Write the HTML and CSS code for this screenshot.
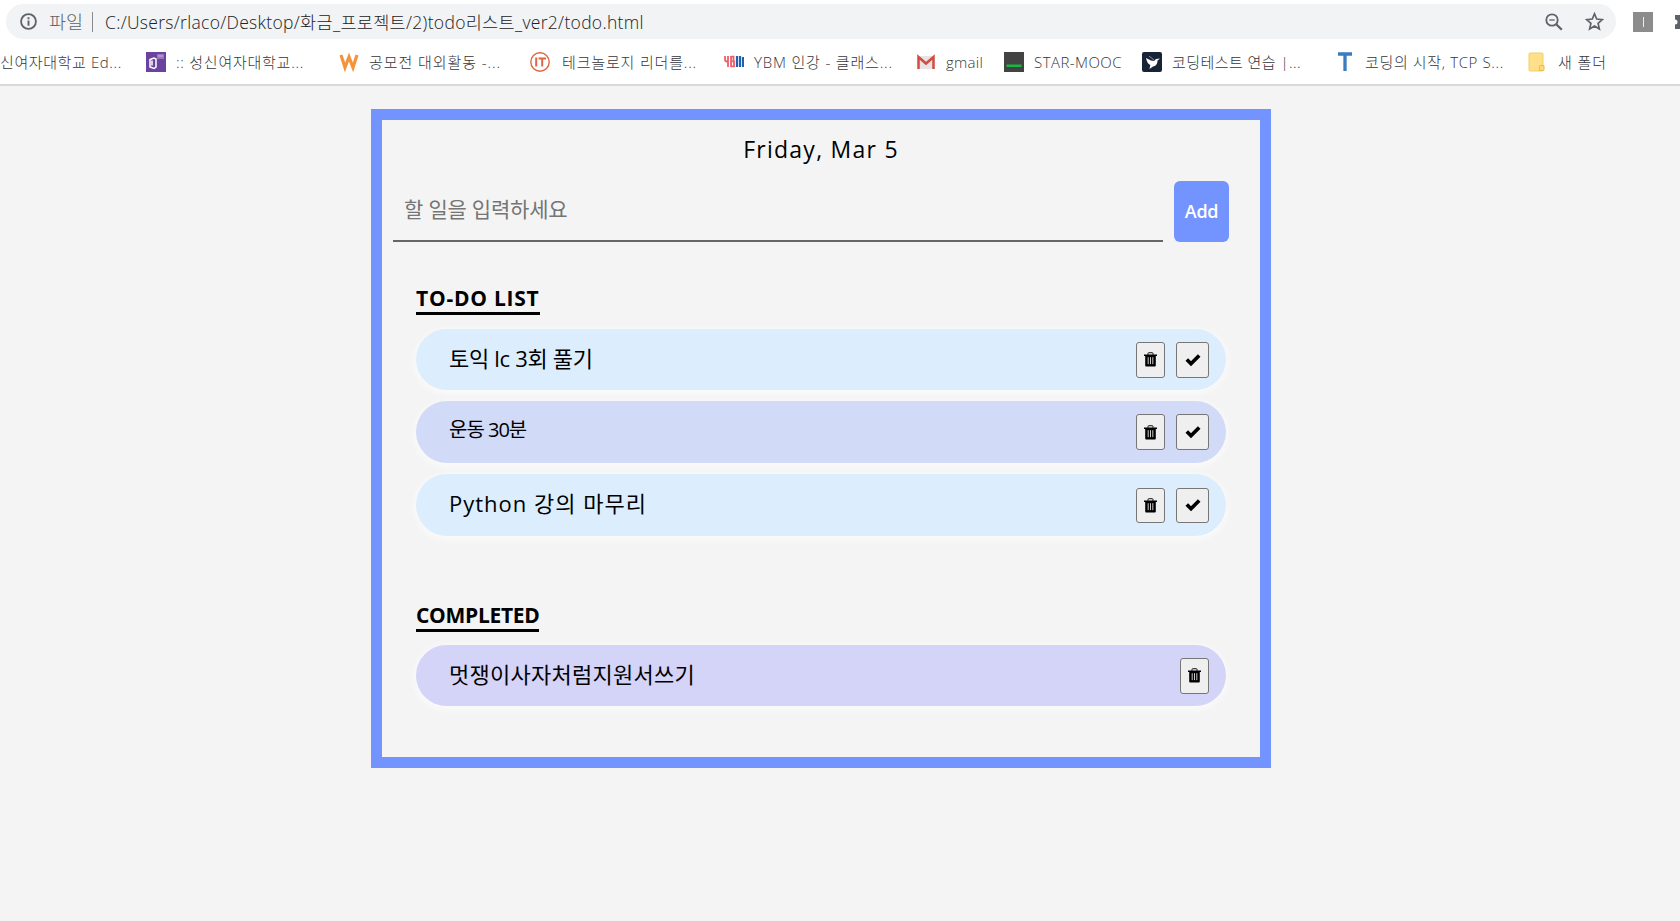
FILE: index.html
```html
<!DOCTYPE html>
<html lang="ko">
<head>
<meta charset="utf-8">
<title>todo</title>
<link rel="stylesheet" href="styles.css">
</head>
<body>
<header class="browser">
  <div class="toolbar">
    <div class="address">
      <svg class="info" viewBox="0 0 16 16"><circle cx="8" cy="8" r="7" fill="none" stroke="#5f6368" stroke-width="1.7"/><path d="M8 7v5M8 4v1.8" stroke="#5f6368" stroke-width="1.8"/></svg>
      <span class="scheme">파일</span>
      <span class="divider"></span>
      <span class="url">C:/Users/rlaco/Desktop/화금_프로젝트/2)todo리스트_ver2/todo.html</span>
      <svg class="zoom" viewBox="0 0 18 18"><circle cx="7" cy="7" r="5.7" fill="none" stroke="#5f6368" stroke-width="1.8"/><path d="M4.3 7h5.4" stroke="#5f6368" stroke-width="1.3"/><path d="M11 11l5.8 5.8" stroke="#5f6368" stroke-width="2.3"/></svg>
      <svg class="star" viewBox="0 0 18 18"><path d="M9 1.7l2.1 5 5.4.5-4.1 3.6 1.2 5.3L9 13.300l-4.600 2.800 1.200-5.300L1.500 7.200l5.400-.5z" fill="none" stroke="#5f6368" stroke-width="1.6"/></svg>
    </div>
    <span class="ext"><span class="ext-bar"></span></span>
    <svg class="puzzle" viewBox="0 0 10 16"><path d="M0 1h10v14H0v-4.500a2.500 2.500 0 0 0 0-5z" fill="#5f6368"/></svg>
  </div>
  <nav class="bookmarks">
    <div class="bm bm1"><span class="t">신여자대학교 Ed...</span></div>
    <div class="bm bm2"><svg viewBox="0 0 20 20"><path fill="#6b429d" d="M0 0h20v20H0z"/><path fill="#9478bd" d="M11 2h7v5h-7z"/><path fill="#c5b4dc" d="M12 3.500h5v1h-5z"/><path d="M4 7.500l4-1.500 2 1v8l-2 1.500-4-1.500zM6 8.500v5" fill="none" stroke="#fff" stroke-width="1.500"/></svg><span class="t">:: 성신여자대학교...</span></div>
    <div class="bm bm3"><svg viewBox="0 0 20 20"><path d="M2 3l4 12.500L10 5l4 10.500L18 3" fill="none" stroke="#f4943a" stroke-width="3.200"/></svg><span class="t">공모전 대외활동 -...</span></div>
    <div class="bm bm4"><svg viewBox="0 0 20 20"><circle cx="10" cy="10" r="9.200" fill="#fff" stroke="#dd6742" stroke-width="1.400"/><path d="M6.200 5.500v9M8.500 6.500H16M12.200 6.500v8" fill="none" stroke="#dd6742" stroke-width="2"/></svg><span class="t">테크놀로지 리더를...</span></div>
    <div class="bm bm5"><svg viewBox="0 0 20 20"><path d="M1 4v3.500q0 2 2 2h1V4M4 9v6M7 4v11M7 4.700h2.500v4.600H7.500h2.500v5H7" fill="none" stroke="#ee5f69" stroke-width="1.800"/><path d="M13 4v11M16 4v11M19 5v10" stroke="#1e61b1" stroke-width="2.200"/></svg><span class="t">YBM 인강 - 클래스...</span></div>
    <div class="bm bm6"><svg viewBox="0 0 20 20"><path fill="#e6e4e4" d="M2 4h16v13H2z"/><path d="M2.500 17V5L10 11.500 17.500 5v12" fill="none" stroke="#d34b43" stroke-width="2.500"/></svg><span class="t">gmail</span></div>
    <div class="bm bm7"><svg viewBox="0 0 20 20"><path fill="#434343" d="M0 0h20v20H0z"/><path fill="#16b83e" d="M2.500 12.500h15v2.500h-15z"/></svg><span class="t">STAR-MOOC</span></div>
    <div class="bm bm8"><svg viewBox="0 0 20 20"><rect width="20" height="20" rx="2" fill="#172337"/><path d="M4 6l5 2.500 3 .5 2-2 4-.5-2.500 2c0 4-2 5.500-4.500 6L7.500 17l.8-4C6 12 5 10 4 6z" fill="#fff"/><path d="M7 4l5 4" stroke="#8190a2"/></svg><span class="t">코딩테스트 연습 |...</span></div>
    <div class="bm bm9"><svg viewBox="0 0 20 20"><path d="M3 2h14M10 2v17" stroke="#3b7cbd" stroke-width="3.300"/></svg><span class="t">코딩의 시작, TCP S...</span></div>
    <div class="bm bm10"><svg viewBox="0 0 20 20"><path d="M3 1h12q1 0 1 1v16q0 1-1 1H3q-1 0-1-1V2q0-1 1-1z" fill="#fee08b" stroke="#f3cf66"/><path d="M12.500 18.500v-4q0-1 1.500-1h3v4q0 1-1 1z" fill="#fbdc7d" stroke="#e7bd4d"/></svg><span class="t">새 폴더</span></div>
  </nav>
</header>
<main class="app">
  <h1 class="date">Friday, Mar 5</h1>
  <form class="entry">
    <div class="field">할 일을 입력하세요</div>
    <button class="add" type="button">Add</button>
  </form>
  <section class="group">
    <h2 class="heading">TO-DO LIST</h2>
    <ul class="list">
      <li class="item sky first"><span class="t t-a">토익 lc 3회 풀기</span>
        <button class="btn trash"><svg viewBox="0 0 14 16"><path d="M4.300 3V1.500q0-.8.8-.8h3.800q.8 0 .8.800V3" fill="none" stroke="#000"/><path d="M0 2.500h14v1.700H0zM1.300 4h11.400v10.500q0 1-1 1H2.300q-1 0-1-1z"/><path d="M4.500 5.500v7.500M7 5.500v7.500M9.500 5.500v7.500" stroke="#ddd"/></svg></button>
        <button class="btn check"><svg viewBox="0 0 16 14"><path d="M1.800 6.500l4.200 4.200 8.200-8.200" fill="none" stroke="#000" stroke-width="3.700"/></svg></button></li>
      <li class="item blue"><span class="t t-b">운동 30분</span>
        <button class="btn trash"><svg viewBox="0 0 14 16"><path d="M4.300 3V1.500q0-.8.8-.8h3.800q.8 0 .8.800V3" fill="none" stroke="#000"/><path d="M0 2.500h14v1.700H0zM1.300 4h11.400v10.500q0 1-1 1H2.300q-1 0-1-1z"/><path d="M4.500 5.500v7.500M7 5.500v7.500M9.500 5.500v7.500" stroke="#ddd"/></svg></button>
        <button class="btn check"><svg viewBox="0 0 16 14"><path d="M1.800 6.500l4.200 4.200 8.200-8.200" fill="none" stroke="#000" stroke-width="3.700"/></svg></button></li>
      <li class="item sky"><span class="t t-c">Python 강의 마무리</span>
        <button class="btn trash short"><svg viewBox="0 0 14 16"><path d="M4.300 3V1.500q0-.8.8-.8h3.800q.8 0 .8.800V3" fill="none" stroke="#000"/><path d="M0 2.500h14v1.700H0zM1.300 4h11.400v10.500q0 1-1 1H2.300q-1 0-1-1z"/><path d="M4.500 5.500v7.500M7 5.500v7.500M9.500 5.500v7.500" stroke="#ddd"/></svg></button>
        <button class="btn check short"><svg viewBox="0 0 16 14"><path d="M1.800 6.500l4.200 4.200 8.200-8.200" fill="none" stroke="#000" stroke-width="3.700"/></svg></button></li>
    </ul>
  </section>
  <section class="group done">
    <h2 class="heading">COMPLETED</h2>
    <ul class="list">
      <li class="item violet first"><span class="t t-d">멋쟁이사자처럼지원서쓰기</span>
        <button class="btn trash"><svg viewBox="0 0 14 16"><path d="M4.300 3V1.500q0-.8.8-.8h3.800q.8 0 .8.800V3" fill="none" stroke="#000"/><path d="M0 2.500h14v1.700H0zM1.300 4h11.400v10.500q0 1-1 1H2.300q-1 0-1-1z"/><path d="M4.500 5.500v7.500M7 5.500v7.500M9.500 5.500v7.500" stroke="#ddd"/></svg></button></li>
    </ul>
  </section>
</main>
</body>
</html>
```
FILE: styles.css
```css
* { box-sizing: border-box; }
body { margin: 0; background: #f4f4f4; color: #000; font-family: "Open Sans", "Noto Sans CJK KR", sans-serif; }
h1, h2, ul { margin: 0; padding: 0; font-weight: 400; }
svg { display: block; flex: none; }
.t { white-space: nowrap; }

.browser { height: 86px; padding-top: 4px; background: #fff; border-bottom: 2px solid #d9d9d9; overflow: hidden; }
.toolbar { display: flex; align-items: center; height: 35px; padding-left: 6px; overflow: hidden; }
.address { display: flex; align-items: center; flex: none; width: 1610px; height: 35px; border-radius: 18px; background: #f1f3f4; padding-left: 14px; font-size: 17.500px; line-height: 34px; font-weight: 300; }
.info { width: 17px; height: 17px; }
.scheme { width: 44px; padding-left: 12px; color: #5f6368; white-space: nowrap; font-size: 18.500px; }
.divider { width: 1px; height: 20px; margin: 0 12px 0 11px; background: #888c90; }
.url { flex: 1; color: #202124; letter-spacing: 0.31px; white-space: nowrap; }
.zoom { width: 18px; height: 18px; margin-right: 22px; }
.star { width: 19px; height: 19px; margin-right: 12px; }
.ext { display: flex; flex: none; align-items: center; justify-content: center; width: 20px; height: 20px; margin-left: 17px; background: #8c8c8c; }
.ext-bar { width: 1px; height: 10px; background: #eee; }
.puzzle { width: 10px; height: 16px; margin-left: 22px; }

.bookmarks { display: flex; height: 45px; align-items: center; font-size: 15px; font-weight: 300; color: #333639; }
.bm { display: flex; flex: none; align-items: center; gap: 10px; height: 24px; line-height: 22px; }
.bm svg { width: 20px; height: 20px; }
.bm1 { width: 146px; letter-spacing: 0.6px; }
.bm2 { width: 193px; letter-spacing: 0.75px; }
.bm3 { width: 191px; letter-spacing: 0.92px; }
.bm4 { width: 194px; gap: 12px; letter-spacing: 0.83px; }
.bm5 { width: 192px; letter-spacing: 0.82px; }
.bm6 { width: 88px; letter-spacing: 0.25px; }
.bm7 { width: 138px; letter-spacing: 0.45px; }
.bm8 { width: 193px; letter-spacing: 0.45px; }
.bm9 { width: 192px; letter-spacing: 0.64px; }
.bm10 { gap: 11px; letter-spacing: 0.9px; }

.app { width: 900px; height: 659px; margin: 23px 0 0 371px; border: 11px solid #7393ff; }
.date { height: 61px; padding-top: 13px; text-align: center; font-size: 23px; line-height: 32px; letter-spacing: 1.25px; }
.entry { display: flex; gap: 11px; height: 61px; padding-left: 11px; }
.field { width: 770px; padding-left: 11px; border-bottom: 2px solid #666; color: #757575; font-size: 21px; line-height: 56px; letter-spacing: -0.2px; }
.add { width: 55px; padding: 0; border: 0; border-radius: 6px; background: #7393ff; color: #fff; font: 600 18px/61px "Open Sans", sans-serif; letter-spacing: -0.3px; }
.group { padding: 43px 34px 0; }
.heading { display: inline-block; height: 30px; border-bottom: 3px solid #000; font-size: 21px; font-weight: 700; line-height: 27px; letter-spacing: 0.76px; vertical-align: top; }
.list { display: flex; flex-direction: column; gap: 11px; padding-top: 14px; list-style: none; }
.item { display: flex; align-items: center; height: 62px; padding: 0 17px 0 33px; border-radius: 31px; box-shadow: 0 2px 9px #fdfdfd; font-size: 22px; line-height: 56px; }
.item.first { height: 61px; }
.item .t { flex: 1; height: 60px; }
.t-a { letter-spacing: -0.3px; }
.t-b { font-size: 20px; letter-spacing: -1px; }
.t-c { letter-spacing: 1px; }
.t-d { letter-spacing: 0.25px; }
.sky { background: #dceefd; }
.blue { background: #d1dbf8; }
.violet { background: #d4d3f8; }
.btn { display: flex; align-items: center; justify-content: center; height: 36px; padding: 0; border: 1px solid #767676; border-radius: 3px; background: #efefef; }
.btn.short { height: 35px; }
.trash { width: 29px; }
.trash svg { width: 13px; height: 15px; }
.check { width: 33px; margin-left: 11px; }
.check svg { width: 16px; height: 14px; }
.done { padding-top: 66px; }
.done .heading { letter-spacing: -0.3px; }
.done .list { padding-top: 13px; }
```
